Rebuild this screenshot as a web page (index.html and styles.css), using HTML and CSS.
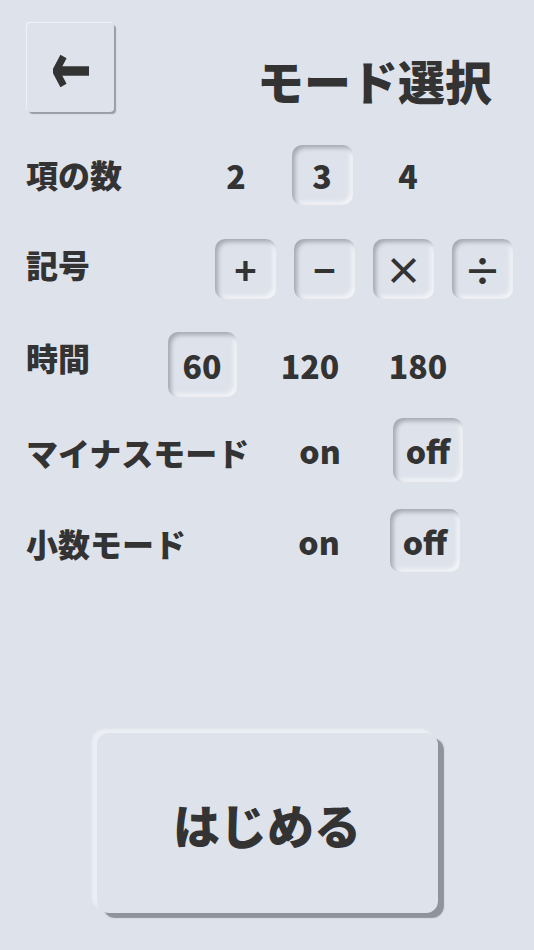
FILE: index.html
```html
<!DOCTYPE html>
<html lang="ja">
<head>
<meta charset="utf-8">
<title>モード選択</title>
<link rel="stylesheet" href="styles.css">
</head>
<body>
<main class="screen">
  <header class="topbar">
    <button class="back-btn" type="button" aria-label="戻る">
      <svg class="back-btn__icon" viewBox="0 0 36 34" width="36" height="34" aria-hidden="true">
        <path d="M10.5 2.5 L2.8 17 L10.5 31.5" fill="none" stroke="#333" stroke-width="7" stroke-linejoin="miter"/>
        <path d="M5 17 H36" fill="none" stroke="#333" stroke-width="9.5"/>
      </svg>
    </button>
    <h1 class="title">モード選択</h1>
  </header>

  <section class="settings">
    <div class="setting setting--terms">
      <span class="setting__label">項の数</span>
      <span class="choice">2</span>
      <span class="choice is-selected">3</span>
      <span class="choice">4</span>
    </div>

    <div class="setting setting--ops">
      <span class="setting__label">記号</span>
      <span class="choice is-selected">+</span>
      <span class="choice is-selected">−</span>
      <span class="choice is-selected">×</span>
      <span class="choice is-selected">÷</span>
    </div>

    <div class="setting setting--time">
      <span class="setting__label">時間</span>
      <span class="choice is-selected">60</span>
      <span class="choice">120</span>
      <span class="choice">180</span>
    </div>

    <div class="setting setting--minus">
      <span class="setting__label">マイナスモード</span>
      <span class="choice">on</span>
      <span class="choice is-selected">off</span>
    </div>

    <div class="setting setting--decimal">
      <span class="setting__label">小数モード</span>
      <span class="choice">on</span>
      <span class="choice is-selected">off</span>
    </div>
  </section>

  <div class="start">
    <button class="start-btn" type="button">はじめる</button>
  </div>
</main>
</body>
</html>
```

FILE: styles.css
```css
* {
  box-sizing: border-box;
}

html,
body {
  margin: 0;
  padding: 0;
  background: #dee2ea;
}

body {
  font-family: "Noto Sans CJK JP", "Noto Sans", sans-serif;
  font-weight: 900;
  color: #333333;
}

.screen {
  width: 534px;
  min-height: 950px;
  display: flex;
  flex-direction: column;
}

/* ---------- header ---------- */
.topbar {
  display: flex;
  align-items: flex-start;
  padding: 23px 0 0 27px;
}

.back-btn {
  width: 87px;
  height: 89px;
  border: none;
  padding: 7px 0 0 1px;
  margin: 0;
  border-radius: 4px;
  background: #dee2ea;
  box-shadow: 2px 2px 1px #999da5, -1px -1px 1px #f1f3f8;
  display: flex;
  align-items: center;
  justify-content: center;
}

.back-btn__icon {
  display: block;
}

.title {
  margin: 33px 42px 0 auto;
  font-size: 47px;
  line-height: 47px;
  font-weight: 900;
  letter-spacing: 0;
}

/* ---------- settings ---------- */
.settings {
  display: flex;
  flex-direction: column;
}

.setting {
  display: grid;
  grid-template-columns: var(--lead) repeat(var(--count), var(--cell));
  height: var(--h);
  margin-top: var(--gap);
  padding-left: 26px;
  align-items: stretch;
}

.setting__label {
  align-self: start;
  margin-top: var(--label-top);
  font-size: 32px;
  line-height: 32px;
  white-space: nowrap;
}

.choice {
  justify-self: center;
  width: var(--box-w);
  display: flex;
  align-items: center;
  justify-content: center;
  font-size: 32px;
  line-height: 32px;
  border-radius: 10px;
}

.choice.is-selected {
  box-shadow: inset 3px 3px 4px #a5a9b2, inset -3px -3px 4px #f3f5f9;
}

.setting--terms {
  --lead: 167px;
  --cell: 86px;
  --count: 3;
  --h: 60px;
  --gap: 33px;
  --box-w: 61px;
  --label-top: 13px;
}

.setting--ops {
  --lead: 180px;
  --cell: 79px;
  --count: 4;
  --h: 60px;
  --gap: 34px;
  --box-w: 61px;
  --label-top: 9px;
}

.setting--ops .choice {
  font-size: 38px;
  font-weight: 700;
}

.setting--time {
  --lead: 122px;
  --cell: 108px;
  --count: 3;
  --h: 65px;
  --gap: 33px;
  --box-w: 69px;
  --label-top: 9px;
}

.setting--minus {
  --lead: 240px;
  --cell: 108px;
  --count: 2;
  --h: 64px;
  --gap: 21px;
  --box-w: 70px;
  --label-top: 18px;
}

.setting--decimal {
  --lead: 240px;
  --cell: 106px;
  --count: 2;
  --h: 63px;
  --gap: 27px;
  --box-w: 70px;
  --label-top: 18px;
}

/* ---------- start button ---------- */
.start {
  display: flex;
  justify-content: center;
  margin-top: 161px;
}

.start-btn {
  width: 341px;
  height: 180px;
  border: none;
  margin: 0;
  padding: 0;
  border-radius: 12px;
  background: #dee2ea;
  font-family: "Noto Sans CJK JP", "Noto Sans", sans-serif;
  font-weight: 900;
  font-size: 47px;
  color: #333333;
  box-shadow: 6px 5px 1px #8f939b, -5px -4px 2px #ebeef4;
}
```
